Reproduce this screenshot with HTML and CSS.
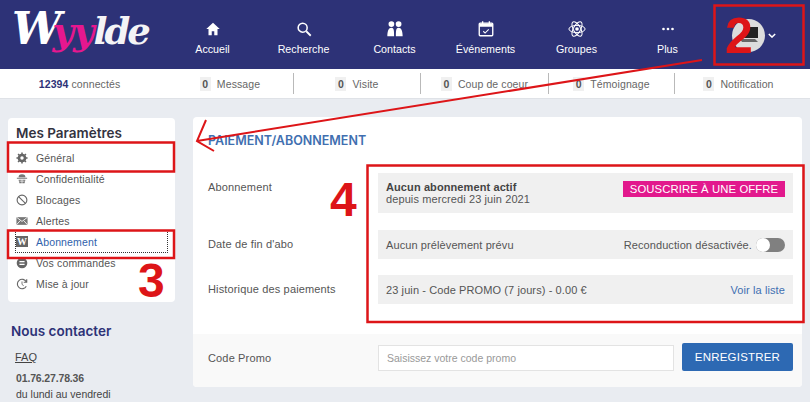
FILE: index.html
```html
<!DOCTYPE html>
<html lang="fr">
<head>
<meta charset="utf-8">
<title>Paiement / Abonnement</title>
<link rel="stylesheet" href="styles.css">
</head>
<body>
<header class="topbar">
  <div class="logo"><span class="logo-w">W</span><span class="logo-y">yy</span><span class="logo-l">lde</span></div>
  <nav class="nav">
    <a class="nav-item"><svg class="nav-icon" viewBox="0 0 20 20"><path d="M10 3 2.500 10H5v7h3.600v-4.500h2.800V17H15v-7h2.500z" fill="#fff"/></svg>Accueil</a>
    <a class="nav-item"><svg class="nav-icon" viewBox="0 0 20 20"><circle cx="8.500" cy="8.500" r="5" fill="none" stroke="#fff" stroke-width="1.700"/><path d="m12.500 12.500 5 5" stroke="#fff" stroke-width="2"/></svg>Recherche</a>
    <a class="nav-item"><svg class="nav-icon" viewBox="0 0 20 20"><g fill="#fff"><circle cx="6" cy="4.500" r="3.200"/><circle cx="14" cy="4.500" r="3.200"/><path d="M1.500 18c0-6 1.500-9.500 4.500-9.500S9 12 9 18zM11 18c0-6 0-9.500 3-9.500s4.500 3.500 4.500 9.500z"/></g></svg>Contacts</a>
    <a class="nav-item"><svg class="nav-icon" viewBox="0 0 20 20"><rect x="2.500" y="3.500" width="15" height="14" rx="1" fill="none" stroke="#fff" stroke-width="1.500"/><path d="M2.500 4h15v3.500h-15zM5.500 1.500h1.500v3H5.500zM13 1.500h1.500v3H13z" fill="#fff"/><path d="m7 12.500 2 2 4-4" fill="none" stroke="#fff" stroke-width="1.200"/></svg>Événements</a>
    <a class="nav-item"><svg class="nav-icon" viewBox="0 0 20 20"><g fill="none" stroke="#fff" stroke-width="1.100"><ellipse cx="10" cy="10" rx="9" ry="4"/><ellipse cx="10" cy="10" rx="9" ry="4" transform="rotate(60 10 10)"/><ellipse cx="10" cy="10" rx="9" ry="4" transform="rotate(120 10 10)"/></g><circle cx="10" cy="10" r="2" fill="#fff"/></svg>Groupes</a>
    <a class="nav-item"><svg class="nav-icon" viewBox="0 0 20 20"><g fill="#fff"><circle cx="5" cy="10" r="1.500"/><circle cx="10" cy="10" r="1.500"/><circle cx="15" cy="10" r="1.500"/></g></svg>Plus</a>
  </nav>
  <div class="user">
    <div class="avatar"><svg class="avatar-pc" viewBox="0 0 20 18"><path d="M5 1h14v11H5z" fill="#222"/><path d="M1 13h15l3 3H3z" fill="#666"/></svg></div>
    <svg class="chevron" viewBox="0 0 10 6"><path d="m1 1 4 4 4-4" fill="none" stroke="#fff" stroke-width="1.800"/></svg>
  </div>
</header>

<div class="subbar">
  <div class="sub-cell first"><b>12394</b>&nbsp;connectés</div>
  <div class="sub-cell"><span class="count">0</span>Message</div>
  <div class="sub-cell"><span class="count">0</span>Visite</div>
  <div class="sub-cell"><span class="count">0</span>Coup de coeur</div>
  <div class="sub-cell"><span class="count">0</span>Témoignage</div>
  <div class="sub-cell last"><span class="count">0</span>Notification</div>
</div>

<div class="content">
  <aside class="side">
    <section class="side-card">
      <h2 class="side-title">Mes Paramètres</h2>
      <ul class="menu">
        <li class="menu-row"><svg class="menu-icon" viewBox="0 0 14 14"><circle cx="7" cy="7" r="3.700" fill="none" stroke="#666" stroke-width="2.800"/><path d="M7 .5v13M.5 7h13M2.400 2.400l9.200 9.200M11.600 2.400l-9.200 9.200" stroke="#666" stroke-width="1.800"/><circle cx="7" cy="7" r="2" fill="#fff"/></svg>Général</li>
        <li class="menu-row"><svg class="menu-icon" viewBox="0 0 14 14"><path d="M3 5c0-2 1-3.500 4-3.500S11 3 11 5zM1 5.500h12v1.200H1zM3 8h8l-1 4H4z" fill="#777"/><path d="M4 9.500h6M7 7v6" stroke="#fff" stroke-width=".8"/></svg>Confidentialité</li>
        <li class="menu-row"><svg class="menu-icon" viewBox="0 0 14 14"><circle cx="7" cy="7" r="5.700" fill="none" stroke="#666" stroke-width="1.300"/><path d="m3 3 8 8" stroke="#666" stroke-width="1.300"/></svg>Blocages</li>
        <li class="menu-row"><svg class="menu-icon" viewBox="0 0 14 14"><path d="M.5 2.500h13v9H.5z" fill="#777"/><path d="m.5 2.500 6.500 5 6.500-5M.5 11.500 5 6.500M13.500 11.500 9 6.500" fill="none" stroke="#fff"/></svg>Alertes</li>
        <li class="menu-row active"><span class="w-badge">W</span>Abonnement</li>
        <li class="menu-row"><svg class="menu-icon" viewBox="0 0 14 14"><circle cx="7" cy="7" r="6.200" fill="#666"/><path d="M4 5.500h6M4 8.500h6" stroke="#fff" stroke-width="1.400"/></svg>Vos commandes</li>
        <li class="menu-row"><svg class="menu-icon" viewBox="0 0 14 14"><path d="M12 9.500A5.500 5.500 0 1 1 12 4.500M12.500 1.500v3.500H9" fill="none" stroke="#666" stroke-width="1.300"/><path d="M7 4v3.500l2 1.500" fill="none" stroke="#666"/></svg>Mise à jour</li>
      </ul>
    </section>
    <section class="contact">
      <h2 class="contact-title">Nous contacter</h2>
      <a class="faq">FAQ</a>
      <div class="phone">01.76.27.78.36</div>
      <div class="hours">du lundi au vendredi</div>
    </section>
  </aside>

  <main class="panel">
    <div class="panel-body">
      <h1 class="panel-title">PAIEMENT/ABONNEMENT</h1>
      <div class="form-row first-row">
        <div class="form-label">Abonnement</div>
        <div class="value tall">
          <div class="value-text"><b>Aucun abonnement actif</b><br>depuis mercredi 23 juin 2021</div>
          <a class="cta">SOUSCRIRE À UNE OFFRE</a>
        </div>
      </div>
      <div class="form-row">
        <div class="form-label">Date de fin d'abo</div>
        <div class="value">
          <div class="value-text">Aucun prélèvement prévu</div>
          <div class="renew">Reconduction désactivée.<span class="toggle"><span class="knob"></span></span></div>
        </div>
      </div>
      <div class="form-row">
        <div class="form-label">Historique des paiements</div>
        <div class="value">
          <div class="value-text">23 juin - Code PROMO (7 jours) - 0.00 €</div>
          <a class="link">Voir la liste</a>
        </div>
      </div>
    </div>
    <div class="panel-foot">
      <div class="form-label">Code Promo</div>
      <div class="promo">
        <input class="promo-input" type="text" placeholder="Saisissez votre code promo">
        <button class="promo-btn" type="button">ENREGISTRER</button>
      </div>
    </div>
  </main>
</div>

<svg class="marks" viewBox="0 0 810 402" aria-hidden="true">
  <g fill="none" stroke="#dd1518" stroke-width="2.500">
    <rect x="714.500" y="5.500" width="89" height="59"/>
    <rect x="8" y="142.500" width="166" height="29"/>
    <rect x="8" y="230.500" width="166" height="27.500"/>
    <rect x="367.500" y="165.500" width="436" height="156.500"/>
    <path d="M702 60 197 141M206 120l-9 21 17 10" stroke-width="2"/>
  </g>
</svg>
<span class="num num-2">2</span>
<span class="num num-3">3</span>
<span class="num num-4">4</span>
</body>
</html>
```
FILE: styles.css
```css
* { box-sizing: border-box; }
html, body { margin: 0; padding: 0; }
body {
  position: relative;
  width: 810px;
  height: 402px;
  overflow: hidden;
  background: #e9ecf1;
  font-family: "Liberation Sans", Arial, sans-serif;
  font-size: 11px;
  color: #444;
}
.topbar {
  display: flex;
  height: 69px;
  background: #2d3277;
  color: #fff;
}
.logo {
  width: 167px;
  padding: 4px 0 0 12px;
  font-family: "DejaVu Serif", serif;
  font-weight: 700;
  font-style: italic;
  font-size: 37px;
  line-height: 50px;
  letter-spacing: -2px;
  white-space: nowrap;
}
.logo-w { font-size: 44px; color: #fff; letter-spacing: -9px; }
.logo-y { color: #e6178f; letter-spacing: -1px; }
.logo-l { color: #f4f4f6; letter-spacing: -3px; }
.nav { display: flex; }
.nav-item {
  display: flex;
  flex-direction: column;
  align-items: center;
  width: 91px;
  padding-top: 20px;
  font-size: 10.700px;
  line-height: 13px;
  color: #fff;
}
.nav-icon { width: 18px; height: 18px; margin-bottom: 5px; }
.user {
  display: flex;
  align-items: center;
  padding: 1px 0 0 19px;
}
.avatar {
  display: flex;
  align-items: center;
  justify-content: center;
  width: 33px;
  height: 33px;
  border-radius: 50%;
  background: #dcdcdc;
}
.avatar-pc { width: 20px; height: 18px; }
.chevron { width: 8px; height: 5px; margin-left: 3px; }
.subbar {
  display: grid;
  grid-template-columns: 167px 127px 127px 128px 126px 127px;
  align-items: center;
  height: 29px;
  background: #fff;
  box-shadow: 0 1px 0 #dfe2e7;
  font-size: 10.500px;
  color: #666;
  letter-spacing: .1px;
}
.sub-cell {
  display: flex;
  align-items: center;
  justify-content: center;
  height: 21px;
  border-right: 1px solid #b9b9b9;
}
.sub-cell.first { border-right: 0; padding-right: 8px; }
.sub-cell.last { border-right: 0; }
.sub-cell b { color: #2d3277; font-weight: 700; }
.count {
  display: inline-block;
  min-width: 11px;
  margin-right: 6px;
  background: #f0f0f0;
  text-align: center;
  font-weight: 700;
  line-height: 14px;
  color: #555;
}
.content {
  display: flex;
  align-items: flex-start;
  gap: 18px;
  padding: 20px 8px 0;
}
.side { width: 167px; flex: none; }
.side-card {
  height: 184px;
  padding: 8px 0 0 8px;
  background: #fff;
  border-radius: 4px;
}
.side-title {
  margin: 0 0 6px;
  font-family: Inter, sans-serif;
  font-size: 13.500px;
  font-weight: 600;
  line-height: 15px;
  color: #33333f;
}
.menu { margin: 0; padding: 0; list-style: none; }
.menu-row {
  display: flex;
  align-items: center;
  gap: 8px;
  height: 21px;
  font-size: 10.500px;
  color: #555;
  letter-spacing: .15px;
}
.menu-row.active {
  position: relative;
  color: #2f62ac;
}
.menu-row.active::after {
  content: "";
  position: absolute;
  left: -1px;
  right: 7px;
  top: -1px;
  bottom: -1px;
  border: 1px dotted #333;
}
.menu-icon { width: 12px; height: 12px; flex: none; }
.w-badge {
  flex: none;
  width: 12px;
  height: 11px;
  background: #666;
  color: #fff;
  font-family: "Liberation Serif", serif;
  font-weight: 700;
  font-size: 10px;
  line-height: 11px;
  text-align: center;
}
.contact { padding: 21px 0 0 3px; }
.contact-title {
  margin: 0 0 10px;
  font-family: Inter, sans-serif;
  font-size: 13.500px;
  font-weight: 600;
  line-height: 16px;
  color: #2d3277;
}
.faq {
  display: block;
  padding-left: 4px;
  text-decoration: underline;
  line-height: 16px;
  color: #444;
}
.phone {
  padding: 5px 0 0 5px;
  font-weight: 700;
  font-size: 10.500px;
  letter-spacing: -.15px;
  line-height: 16px;
  color: #555;
}
.hours { padding: 0 0 0 5px; font-size: 10.500px; line-height: 16px; }
.panel {
  flex: 1;
  height: 270px;
  margin-top: -1px;
  background: #fff;
  border-radius: 4px;
  overflow: hidden;
}
.panel-body { height: 217px; padding: 15px 9px 0 15px; }
.panel-title {
  margin: 0 0 24px;
  padding-top: 1px;
  font-family: Inter, sans-serif;
  font-size: 12.500px;
  font-weight: 600;
  line-height: 16px;
  color: #3f6fb0;
}
.form-row {
  display: flex;
  align-items: flex-start;
  margin-bottom: 16px;
}
.form-row.first-row { margin-bottom: 17px; }
.form-label {
  flex: none;
  width: 170px;
  line-height: 29px;
  color: #555;
  letter-spacing: .15px;
}
.value {
  display: flex;
  flex: 1;
  align-items: center;
  justify-content: space-between;
  height: 29px;
  padding: 0 8px;
  background: #f0f0f0;
  color: #555;
  letter-spacing: .1px;
}
.value.tall { height: 40px; }
.value-text { line-height: 12px; }
.value-text b { color: #444; }
.cta {
  width: 162px;
  height: 16px;
  margin-top: -8px;
  background: #e2198d;
  color: #fff;
  font-size: 11.300px;
  line-height: 16px;
  text-align: center;
  white-space: nowrap;
}
.renew { display: flex; align-items: center; }
.toggle {
  position: relative;
  width: 29px;
  height: 14px;
  margin-left: 4px;
  border-radius: 7px;
  background: #808080;
}
.knob {
  position: absolute;
  left: 0;
  top: 0;
  width: 14px;
  height: 14px;
  border-radius: 50%;
  background: #fff;
}
.link { color: #3f6fb0; }
.panel-foot {
  display: flex;
  align-items: center;
  height: 53px;
  padding: 0 9px 4px 15px;
  background: #f9f9f9;
}
.promo { display: flex; flex: 1; gap: 8px; align-items: center; margin-top: -3px; }
.promo-input {
  width: 296px;
  height: 26px;
  margin-top: 2px;
  padding: 0 8px;
  border: 1px solid #e3e3e3;
  background: #fff;
  font-family: "Liberation Sans", Arial, sans-serif;
  font-size: 10.500px;
}
.promo-input::placeholder { color: #999; opacity: 1; }
.promo-btn {
  width: 111px;
  height: 28px;
  padding: 0;
  border: 0;
  border-radius: 2px;
  background: #2d69b3;
  color: #fff;
  font-family: "Liberation Sans", Arial, sans-serif;
  font-size: 11.500px;
  letter-spacing: .2px;
}
.marks {
  position: absolute;
  left: 0;
  top: 0;
  width: 810px;
  height: 402px;
  pointer-events: none;
}
.num {
  position: absolute;
  font-weight: 700;
  font-size: 48px;
  line-height: 48px;
  color: #dd1518;
}
.num-2 { left: 725px; top: 12px; font-size: 50px; }
.num-3 { left: 138px; top: 257px; }
.num-4 { left: 330px; top: 176px; }
```
